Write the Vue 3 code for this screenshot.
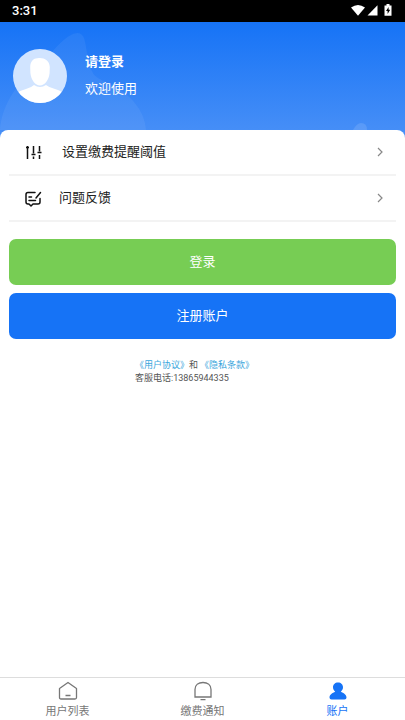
<script setup>
const entries = [
  { id: 'threshold', label: '设置缴费提醒阈值' },
  { id: 'feedback', label: '问题反馈' },
]
const tabs = [
  { id: 'users', label: '用户列表' },
  { id: 'notices', label: '缴费通知' },
  { id: 'account', label: '账户' },
]
const activeTab = 'account'
</script>

<template>
  <div class="screen">
    <div class="status">
      <span>3:31</span>
      <svg class="status-icons" width="42" height="14" viewBox="0 0 42 14" aria-hidden="true">
        <path d="M0 3.400Q7 -1.600 14 3.400L7 11.800z" fill="#fff" />
        <path d="M26.500 1.300V11.500H16.500z" fill="#fff" />
        <path d="M33.500 1.400h2V0h3v1.400h2v10.300h-7z" fill="#fff" />
        <path d="M37.600 3l-2.600 4h1.600v3l2.600-4.200h-1.600z" fill="#000" />
      </svg>
    </div>

    <header class="hero">
      <svg class="decor left" width="148" height="108" viewBox="0 0 148 108" aria-hidden="true">
        <path d="M0 108C2 83 16 62 37 45C50 34 58 21 69 14Q80 7 84 16C87 25 87 42 94 53C105 62 122 65 134 80Q145 93 146 108z" fill="#fff" fill-opacity=".06" />
      </svg>
      <svg class="decor right" width="20" height="8" viewBox="0 0 20 8" aria-hidden="true">
        <path d="M0 8Q4 1 8 1Q14 1 14 8z" fill="#fff" fill-opacity=".12" />
      </svg>
      <svg class="avatar" width="56" height="56" viewBox="0 0 56 56" role="img" aria-label="头像">
        <defs>
          <clipPath id="face"><circle cx="28" cy="28" r="27" /></clipPath>
        </defs>
        <circle cx="28" cy="28" r="27" fill="#d1e4ff" />
        <g clip-path="url(#face)" fill="#fff">
          <path d="M18.200 19C18.200 13 22 10 25.500 10.200C31 9 37.600 12 37.800 19L37.600 25C37 32 32.500 37.500 28 37.500S19 32 18.400 25z" />
          <path d="M22 37Q28 41 34 37Q37 39.500 43 41Q51 43.500 53 47V56H3V47Q6 43 14 41Q19.500 39.500 22 37z" />
        </g>
      </svg>
      <div class="welcome">
        <strong>请登录</strong>
        <span>欢迎使用</span>
      </div>
    </header>

    <main class="sheet">
      <nav class="entries">
        <a v-for="entry in entries" :key="entry.id" href="#" class="entry" :class="entry.id">
          <svg v-if="entry.id === 'threshold'" width="18" height="18" viewBox="0 0 18 18" fill="none" stroke="#111" stroke-width="1.500" aria-hidden="true">
            <path d="M3.500 3V16M9.500 3V10.500M9.500 13.500V16M15.500 3V8.500M15.500 12V16" />
            <path d="M2 4.500H5M7.500 11.500H11.500M13.500 9.500H17.500" />
          </svg>
          <svg v-else width="18" height="18" viewBox="0 0 18 18" fill="none" stroke="#111" stroke-width="1.500" stroke-linecap="round" stroke-linejoin="round" aria-hidden="true">
            <path d="M11 3.500H4Q2 3.500 2 5.500V13Q2 15 4 15H5L7 17L9 15H14Q16 15 16 13V9.500" />
            <path d="M16.500 3.500L12 9M5 8H7.500M5 11.500H11.500" />
          </svg>
          <span class="entry-label">{{ entry.label }}</span>
          <svg width="8" height="10" viewBox="0 0 8 10" fill="none" stroke="#888" stroke-width="1.200" aria-hidden="true">
            <path d="M2 1L6 5L2 9" />
          </svg>
        </a>
      </nav>

      <div class="actions">
        <button type="button" class="login">登录</button>
        <button type="button" class="register">注册账户</button>
      </div>

      <div class="legal">
        <div><a href="#">《用户协议》</a>和<a href="#" class="privacy">《隐私条款》</a></div>
        <div>客服电话:13865944335</div>
      </div>
    </main>

    <nav class="tabs">
      <a v-for="tab in tabs" :key="tab.id" href="#" class="tab" :class="{ active: tab.id === activeTab }">
        <svg v-if="tab.id === 'users'" width="20" height="20" viewBox="0 0 20 20" fill="none" stroke="currentColor" stroke-width="1.300" stroke-linejoin="round" aria-hidden="true">
          <path d="M1.500 7.500L10 1.500L18.500 7.500V16.500Q18.500 18 17 18H3Q1.500 18 1.500 16.500zM7.500 14.500H12.500" />
        </svg>
        <svg v-else-if="tab.id === 'notices'" width="20" height="20" viewBox="0 0 20 20" fill="none" stroke="currentColor" stroke-width="1.300" aria-hidden="true">
          <path d="M2 16V8.500C2 4 5.500 1.500 10 1.500S18 4 18 8.500V16zM7.500 18.700H12.500" />
        </svg>
        <svg v-else width="20" height="20" viewBox="0 0 20 20" fill="currentColor" aria-hidden="true">
          <path d="M10 1.500C13 1.500 15 3.600 15 6.300C15 8.300 14 9.700 12.800 10.700C15.500 11.700 18.500 13.500 18.500 16.500Q18.500 18.500 16.500 18.500H3.500Q1.500 18.500 1.500 16.500C1.500 13.500 4.500 11.700 7.200 10.700C6 9.700 5 8.300 5 6.300C5 3.600 7 1.500 10 1.500z" />
        </svg>
        <span>{{ tab.label }}</span>
      </a>
    </nav>
  </div>
</template>

<style>
body {
  margin: 0;
}
</style>

<style scoped>
.screen {
  display: flex;
  flex-direction: column;
  min-height: 100vh;
  background: #fff;
  color: #222;
  font-family: Roboto, "Noto Sans CJK SC", sans-serif;
  font-size: 13px;
  line-height: 18px;
}

a {
  color: inherit;
  text-decoration: none;
}

.status {
  display: flex;
  align-items: center;
  justify-content: space-between;
  height: 22px;
  padding: 0 12px;
  background: #000;
  color: #fff;
  font-weight: 500;
}

.hero {
  position: relative;
  display: flex;
  gap: 17px;
  height: 90px;
  padding: 26px 12px 0;
  background: linear-gradient(#1673f6, #4990f7);
  color: #fff;
}

.decor {
  position: absolute;
  bottom: 8px;
}

.decor.left {
  left: 0;
}

.decor.right {
  right: 32px;
}

.avatar {
  position: relative;
}

.welcome {
  position: relative;
  display: flex;
  flex-direction: column;
  gap: 9px;
  padding-top: 5px;
}

.sheet {
  position: relative;
  flex: 1;
  margin-top: -8px;
  border-radius: 8px 8px 0 0;
  background: #fff;
}

.entries {
  padding: 0 9px;
}

.entry {
  display: flex;
  align-items: center;
  height: 44px;
  padding: 0 12px 0 15px;
  border-bottom: 2px solid #f3f3f3;
}

.entry-label {
  flex: 1;
  margin-left: 17px;
}

.threshold .entry-label {
  margin-left: 20px;
}

.actions {
  display: flex;
  flex-direction: column;
  gap: 8px;
  padding: 17px 9px 20px;
}

button {
  height: 46px;
  padding: 0;
  border: 0;
  border-radius: 7px;
  color: #fff;
  font: inherit;
}

.login {
  background: #77cd54;
}

.register {
  background: #1673f6;
}

.legal {
  width: fit-content;
  margin: 0 auto;
  padding-right: 16px;
  color: #555;
  font-size: 9px;
  line-height: 13px;
}

.legal a {
  color: #38a5dc;
}

.privacy {
  margin-left: 2px;
}

.tabs {
  display: flex;
  border-top: 1px solid #ddd;
}

.tab {
  display: flex;
  flex: 1;
  flex-direction: column;
  align-items: center;
  gap: 3px;
  padding: 3px 0 1px;
  color: #777;
  font-size: 11px;
  line-height: 15px;
}

.tab.active {
  color: #1673f6;
}
</style>
